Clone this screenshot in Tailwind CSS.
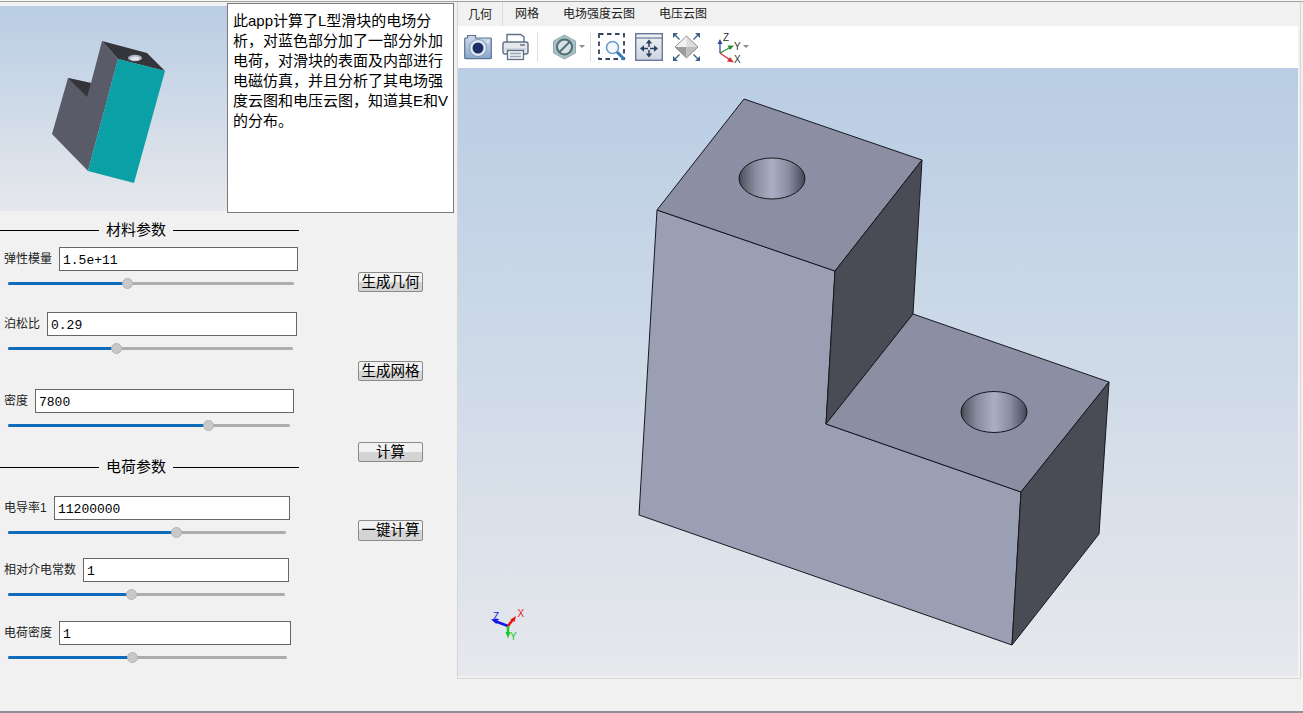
<!DOCTYPE html>
<html lang="zh">
<head>
<meta charset="UTF-8">
<title>L型滑块电场分析</title>
<script src="https://cdn.jsdelivr.net/npm/@tailwindcss/browser@4"></script>
</head>
<body class="bg-[#f1f1f1] w-[1303px] h-[713px] overflow-hidden font-['Liberation_Sans','Noto_Sans_CJK_SC',sans-serif] text-black">
<div class="h-[713px] flex flex-col">
  <div class="h-px bg-[#f7f7f7]"></div>
  <div class="h-px bg-[#a0a0a0]"></div>
  <div class="flex flex-1 min-h-0">

    <!-- left panel -->
    <div class="w-[457px] shrink-0">
      <div class="flex h-[209px] items-start">
        <div class="w-[227px] h-[205px] mt-[4px] bg-gradient-to-b from-[#b9cde4] to-[#e6e8ec]">
          <svg width="227" height="205" viewBox="0 6 227 205" class="block">
            <polygon points="102,41 147,53 165,71 118,59" fill="#34353b"/>
            <ellipse cx="135" cy="58" rx="7" ry="3.2" fill="#aeb2c4"/>
            <ellipse cx="135" cy="58.5" rx="4.5" ry="2" fill="#dfe3ee"/>
            <polygon points="102,41 118,59 88,171 52,134 68,78 91,83" fill="#5a5b68"/>
            <polygon points="68,78 91,83 87,97" fill="#34353b"/>
            <polygon points="118,59 165,71 134,183 88,171" fill="#0aa0a6"/>
          </svg>
        </div>
        <div class="w-[227px] h-[210px] mt-[1px] bg-white border border-[#7a7a7a] px-[5px] pt-[7px] text-[15px] leading-[20px]">此app计算了L型滑块的电场分析，对蓝色部分加了一部分外加电荷，对滑块的表面及内部进行电磁仿真，并且分析了其电场强度云图和电压云图，知道其E和V的分布。</div>
      </div>

      <div class="flex">
        <div class="w-[355px] shrink-0">
          <div class="flex items-center w-[299px] h-[20px] mt-[9px] text-[15px]">
            <div class="w-[99px] h-px bg-black"></div>
            <span class="w-[74px] text-center">材料参数</span>
            <div class="flex-1 h-px bg-black"></div>
          </div>

          <div class="flex items-center mt-[7px] h-[24px] pl-[4px] text-[12px] text-[#222]">
            <span class="w-[55px]">弹性模量</span>
            <div class="w-[239px] h-[24px] bg-white border border-[#666] px-[3px] font-['Liberation_Mono',monospace] text-[13px] leading-[25px] text-black">1.5e+11</div>
          </div>
          <div class="relative mt-[11px] ml-[8px] w-[286px] h-[3px] mb-[27px] bg-[#adadad] rounded-full">
            <div class="h-[3px] w-[119px] bg-[#0f6cbd] rounded-full"></div>
            <div class="absolute left-[114px] -top-[4px] w-[11px] h-[11px] rounded-full bg-[#c8c8c8] border border-[#b4b4b4]"></div>
          </div>

          <div class="flex items-center h-[24px] pl-[4px] text-[12px] text-[#222]">
            <span class="w-[43px]">泊松比</span>
            <div class="w-[250px] h-[24px] bg-white border border-[#666] px-[3px] font-['Liberation_Mono',monospace] text-[13px] leading-[25px] text-black">0.29</div>
          </div>
          <div class="relative mt-[11px] ml-[8px] w-[285px] h-[3px] mb-[39px] bg-[#adadad] rounded-full">
            <div class="h-[3px] w-[108px] bg-[#0f6cbd] rounded-full"></div>
            <div class="absolute left-[103px] -top-[4px] w-[11px] h-[11px] rounded-full bg-[#c8c8c8] border border-[#b4b4b4]"></div>
          </div>

          <div class="flex items-center h-[24px] pl-[4px] text-[12px] text-[#222]">
            <span class="w-[31px]">密度</span>
            <div class="w-[259px] h-[24px] bg-white border border-[#666] px-[3px] font-['Liberation_Mono',monospace] text-[13px] leading-[25px] text-black">7800</div>
          </div>
          <div class="relative mt-[11px] ml-[8px] w-[282px] h-[3px] bg-[#adadad] rounded-full">
            <div class="h-[3px] w-[200px] bg-[#0f6cbd] rounded-full"></div>
            <div class="absolute left-[195px] -top-[4px] w-[11px] h-[11px] rounded-full bg-[#c8c8c8] border border-[#b4b4b4]"></div>
          </div>

          <div class="flex items-center w-[299px] h-[20px] mt-[30px] text-[15px]">
            <div class="w-[99px] h-px bg-black"></div>
            <span class="w-[74px] text-center">电荷参数</span>
            <div class="flex-1 h-px bg-black"></div>
          </div>

          <div class="flex items-center mt-[19px] h-[24px] pl-[4px] text-[12px] text-[#222]">
            <span class="w-[50px]">电导率1</span>
            <div class="w-[236px] h-[24px] bg-white border border-[#666] px-[3px] font-['Liberation_Mono',monospace] text-[13px] leading-[25px] text-black">11200000</div>
          </div>
          <div class="relative mt-[11px] ml-[8px] w-[278px] h-[3px] mb-[24px] bg-[#adadad] rounded-full">
            <div class="h-[3px] w-[168px] bg-[#0f6cbd] rounded-full"></div>
            <div class="absolute left-[163px] -top-[4px] w-[11px] h-[11px] rounded-full bg-[#c8c8c8] border border-[#b4b4b4]"></div>
          </div>

          <div class="flex items-center h-[24px] pl-[4px] text-[12px] text-[#222]">
            <span class="w-[79px]">相对介电常数</span>
            <div class="w-[206px] h-[24px] bg-white border border-[#666] px-[3px] font-['Liberation_Mono',monospace] text-[13px] leading-[25px] text-black">1</div>
          </div>
          <div class="relative mt-[11px] ml-[8px] w-[277px] h-[3px] mb-[25px] bg-[#adadad] rounded-full">
            <div class="h-[3px] w-[123px] bg-[#0f6cbd] rounded-full"></div>
            <div class="absolute left-[118px] -top-[4px] w-[11px] h-[11px] rounded-full bg-[#c8c8c8] border border-[#b4b4b4]"></div>
          </div>

          <div class="flex items-center h-[24px] pl-[4px] text-[12px] text-[#222]">
            <span class="w-[55px]">电荷密度</span>
            <div class="w-[232px] h-[24px] bg-white border border-[#666] px-[3px] font-['Liberation_Mono',monospace] text-[13px] leading-[25px] text-black">1</div>
          </div>
          <div class="relative mt-[11px] ml-[8px] w-[279px] h-[3px] bg-[#adadad] rounded-full">
            <div class="h-[3px] w-[124px] bg-[#0f6cbd] rounded-full"></div>
            <div class="absolute left-[119px] -top-[4px] w-[11px] h-[11px] rounded-full bg-[#c8c8c8] border border-[#b4b4b4]"></div>
          </div>
        </div>

        <!-- buttons -->
        <div class="w-[65px] ml-[3px] pt-[61px] flex flex-col text-[14.5px]">
          <button class="h-[20px] w-[65px] leading-[18px] border border-[#8a8a8a] rounded-[2px] bg-gradient-to-b from-[#f2f2f2] from-50% to-[#d4d4d4] to-50%">生成几何</button>
          <button class="h-[20px] w-[65px] leading-[18px] mt-[69px] border border-[#8a8a8a] rounded-[2px] bg-gradient-to-b from-[#f2f2f2] from-50% to-[#d4d4d4] to-50%">生成网格</button>
          <button class="h-[20px] w-[65px] leading-[18px] mt-[61px] border border-[#8a8a8a] rounded-[2px] bg-gradient-to-b from-[#f2f2f2] from-50% to-[#d4d4d4] to-50%">计算</button>
          <button class="h-[21px] w-[65px] leading-[19px] mt-[58px] border border-[#8a8a8a] rounded-[2px] bg-gradient-to-b from-[#f2f2f2] from-50% to-[#d4d4d4] to-50%">一键计算</button>
        </div>
      </div>
    </div>

    <!-- right panel -->
    <div class="w-[844px] h-[677px] flex flex-col border-l border-r border-b border-[#d6d6d6]">
      <div class="flex h-[24px] shrink-0 text-[12px] text-[#222] items-center">
        <div class="w-[45px] h-[24px] leading-[26px] text-center border-r border-[#dcdcdc]">几何</div>
        <div class="ml-[12px] w-[36px]">网格</div>
        <div class="ml-[12px] w-[84px]">电场强度云图</div>
        <div class="ml-[12px]">电压云图</div>
      </div>
      <div class="h-[42px] w-[840px] shrink-0 bg-white flex items-center pl-[6px]">
        <!-- camera -->
        <svg width="28" height="26" viewBox="0 0 28 26" class="shrink-0">
          <defs><linearGradient id="camBody" x1="0" x2="0" y1="0" y2="1"><stop offset="0" stop-color="#cfdcec"/><stop offset="1" stop-color="#8aa6c8"/></linearGradient></defs>
          <path d="M2 4h1.5V1.5h8V4h15a.8.8 0 0 1 .8.8v19a.8.8 0 0 1-.8.8H1.5a.8.8 0 0 1-.8-.8V4.800a.8.8 0 0 1 .8-.8z" fill="url(#camBody)" stroke="#5b7394" stroke-width="1.2"/>
          <circle cx="14" cy="14" r="8.500" fill="#dfe8f2" stroke="#7d96b6"/>
          <circle cx="14" cy="14" r="5.500" fill="#1d2f66"/>
          <circle cx="24" cy="7.500" r="1" fill="#fff"/>
        </svg>
        <!-- printer -->
        <svg width="27" height="28" viewBox="0 0 27 28" class="ml-[10px] shrink-0">
          <path d="M5 9V1.500h14L22 4v5" fill="#fff" stroke="#5e7087" stroke-width="1.400"/>
          <rect x="1" y="9" width="25" height="12" rx="2" fill="#e4e8ec" stroke="#5e7087" stroke-width="1.400"/>
          <path d="M18 12h5" stroke="#67788e" stroke-width="1.500"/>
          <path d="M3 16h21" stroke="#b8c2cd"/>
          <rect x="5.500" y="17.500" width="16" height="9" fill="#f2f4f6" stroke="#5e7087" stroke-width="1.300"/>
          <path d="M8 20.500h11M8 23.500h11" stroke="#9aa6b3" stroke-width="1.300"/>
        </svg>
        <div class="w-px h-[30px] bg-[#dedede] ml-[8px] shrink-0"></div>
        <!-- hide/show hexagon -->
        <svg width="23" height="26" viewBox="0 0 23 26" class="ml-[15px] shrink-0">
          <polygon points="11.500,1 22.500,7 22.500,19 11.500,25 .5,19 .5,7" fill="#a8c0c4" stroke="#93abb0"/>
          <circle cx="11.500" cy="13" r="7.500" fill="#d6e0e2" stroke="#4d6f77" stroke-width="2"/>
          <path d="M6.500 18L16.500 8" stroke="#4d6f77" stroke-width="2"/>
        </svg>
        <svg width="6" height="4" viewBox="0 0 6 4" class="ml-[3px] shrink-0"><polygon points="0,0 6,0 3,3" fill="#8a8a8a"/></svg>
        <div class="w-px h-[30px] bg-[#dedede] ml-[5px] shrink-0"></div>
        <!-- zoom box -->
        <svg width="28" height="28" viewBox="0 0 28 28" class="ml-[7px] shrink-0">
          <rect x="1" y="1" width="25" height="25" fill="none" stroke="#33435f" stroke-width="1.800" stroke-dasharray="4.500 3.500"/>
          <circle cx="14.500" cy="14.500" r="6" fill="#f3f8fc" stroke="#6b9cc6" stroke-width="1.600"/>
          <path d="M19 19l7.500 7.500" stroke="#2f7dbd" stroke-width="3"/>
        </svg>
        <!-- fit -->
        <svg width="28" height="28" viewBox="0 0 28 28" class="ml-[9px] shrink-0">
          <defs><linearGradient id="fitBody" x1="0" x2="0" y1="0" y2="1"><stop offset="0" stop-color="#f0f2f5"/><stop offset="1" stop-color="#cdd4de"/></linearGradient></defs>
          <rect x=".7" y=".7" width="26.600" height="26.600" fill="url(#fitBody)" stroke="#66799a" stroke-width="1.400"/>
          <path d="M1 5h26" stroke="#66799a" stroke-width="1.200"/>
          <path d="M14 10v4M14 17v4M9 15.500h4M15 15.500h4" stroke="#2c3f60" stroke-width="1.500"/>
          <path d="M14 6.500l-3.200 4h6.400zM14 24.500l-3.200-4h6.400zM5 15.500l4-3.200v6.400zM23 15.500l-4-3.200v6.400z" fill="#2c3f60"/>
        </svg>
        <!-- view cube -->
        <svg width="27" height="28" viewBox="0 0 27 28" class="ml-[10px] shrink-0">
          <polygon points="13.500,3 25,14 2,14" fill="#f2f2f2"/>
          <polygon points="13.500,3 25,14 13.500,14" fill="#dcdcdc"/>
          <polygon points="2,14 13.500,14 13.500,25" fill="#9c9c9c"/>
          <polygon points="25,14 13.500,14 13.500,25" fill="#bdbdbd"/>
          <polygon points="13.500,3 25,14 13.500,25 2,14" fill="none" stroke="#8f8f8f" stroke-width="1"/>
          <path d="M1.500 1.500l5 5M25.500 1.500l-5 5M1.500 26.500l5-5M25.500 26.500l-5-5" stroke="#3f6187" stroke-width="1.400"/>
          <path d="M0 0h5l-5 5zM27 0h-5l5 5zM0 28h5l-5-5zM27 28h-5l5-5z" fill="#3f6187"/>
        </svg>
        <!-- axes, drawn in page coordinates -->
        <svg width="26" height="36" viewBox="717 29 26 36" class="ml-[17px] shrink-0">
          <path d="M720 53V43" stroke="#2b4f9e" stroke-width="1.300"/><polygon points="720,39 717.500,44 722.500,44" fill="#2b4f9e"/>
          <path d="M720 53L730 47.500" stroke="#2a8f3c" stroke-width="1.300"/><polygon points="734,45.500 727.500,45.500 730,50" fill="#2a8f3c"/>
          <path d="M720 53L730 60" stroke="#d8303a" stroke-width="1.300"/><polygon points="734,62.500 727,61.500 730,57" fill="#d8303a"/>
          <text x="723" y="41" font-size="10" fill="#333" font-family="Liberation Sans, sans-serif">Z</text>
          <text x="734" y="50" font-size="10" fill="#333" font-family="Liberation Sans, sans-serif">Y</text>
          <text x="734" y="63" font-size="10" fill="#333" font-family="Liberation Sans, sans-serif">X</text>
        </svg>
        <svg width="6" height="4" viewBox="0 0 6 4" class="shrink-0"><polygon points="0,0 6,0 3,3" fill="#8a8a8a"/></svg>
      </div>

      <!-- viewport, drawn in page coordinates -->
      <div class="w-[840px] h-[608px] shrink-0 bg-gradient-to-b from-[#b9cde4] to-[#e6e8ec]">
        <svg width="840" height="608" viewBox="458 68 840 608" class="block">
          <defs>
            <linearGradient id="holeGrad" x1="0" x2="1" y1="0" y2="0">
              <stop offset="0" stop-color="#3e404a"/>
              <stop offset="0.06" stop-color="#5a5d6a"/>
              <stop offset="0.25" stop-color="#8a8d9f"/>
              <stop offset="0.5" stop-color="#abafc4"/>
              <stop offset="0.75" stop-color="#8a8d9f"/>
              <stop offset="0.94" stop-color="#55586a"/>
              <stop offset="1" stop-color="#3e404a"/>
            </linearGradient>
          </defs>
          <g stroke="#16181e" stroke-width="1" stroke-linejoin="round">
            <polygon points="657,210 835,271 826,424 1021,492 1012,645 639,515" fill="#9b9fb4"/>
            <polygon points="657,210 744,99 922,160 835,271" fill="#8c8fa3"/>
            <polygon points="835,271 922,160 913,314 826,424" fill="#4a4c55"/>
            <polygon points="826,424 913,314 1109,382 1021,492" fill="#8c8fa3"/>
            <polygon points="1021,492 1109,382 1099,534 1012,645" fill="#4a4c55"/>
            <ellipse cx="772" cy="178.500" rx="33" ry="20.500" fill="url(#holeGrad)"/>
            <ellipse cx="994" cy="412" rx="33" ry="20.500" fill="url(#holeGrad)"/>
          </g>
          <!-- triad -->
          <g stroke-width="2.500" fill="none">
            <path d="M508 626L496 621.500" stroke="#1414e6"/>
            <path d="M508 626V634" stroke="#18c832"/>
            <path d="M508 626L513 619.500" stroke="#ee1414"/>
          </g>
          <polygon points="491,619.500 498,618.500 496.500,624" fill="#1414e6"/>
          <polygon points="508,638.500 505.500,632 510.500,632" fill="#18c832"/>
          <polygon points="516,616 510.500,619.500 514.500,622" fill="#ee1414"/>
          <g font-size="10" font-family="Liberation Sans, sans-serif">
            <text x="493" y="620" fill="#1414e6">Z</text>
            <text x="517.500" y="617" fill="#ee1414">X</text>
            <text x="510" y="640" fill="#18c832">Y</text>
          </g>
        </svg>
      </div>
    </div>
  </div>
  <div class="h-[2px] bg-[#8a8f99]"></div>
</div>
</body>
</html>
